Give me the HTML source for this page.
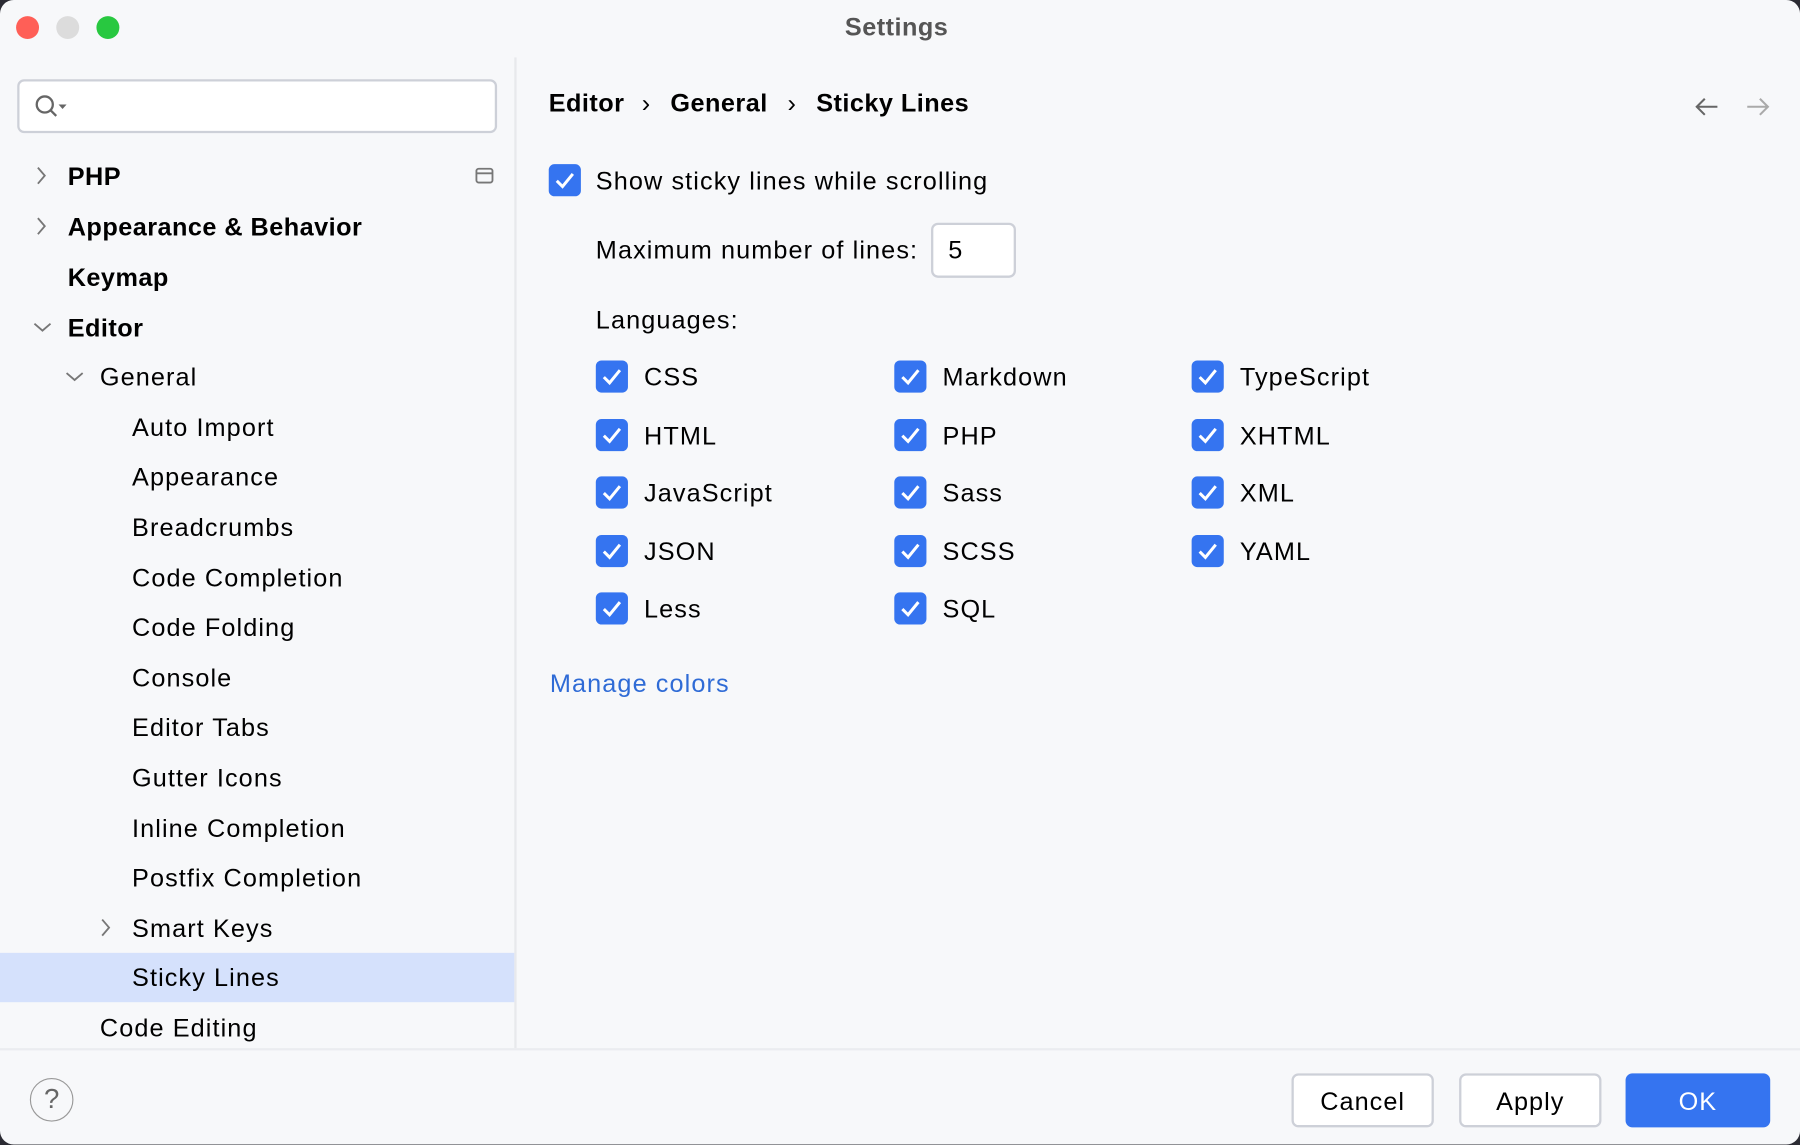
<!DOCTYPE html>
<html><head><meta charset="utf-8"><style>
html,body{margin:0;padding:0;width:1800px;height:1144px;overflow:hidden;background:#2b2b33}
#s{position:absolute;left:0;top:0;width:1568px;height:997px;transform:scale(1.148);transform-origin:0 0;background:#f7f8fa;border-radius:12px;overflow:hidden;font-family:"Liberation Sans",sans-serif;color:#000}
.a{position:absolute;white-space:nowrap}
.t{position:absolute;font-size:22px;line-height:26px;transform:translateY(-12px);white-space:nowrap;letter-spacing:0.95px}
.b{font-weight:bold;letter-spacing:0.4px}
.cb{position:absolute;width:28px;height:28px;background:#3574f0;border-radius:5px}
.cb svg{position:absolute;left:0;top:0}
.btn{position:absolute;top:935px;height:47px;border:2px solid #cdd0d8;border-radius:6px;background:#fff;box-sizing:border-box;font-size:22px;line-height:45px;text-align:center;letter-spacing:0.9px}
</style></head><body><div id="s">
<div class="a" style="left:14px;top:14px;width:20px;height:20px;border-radius:50%;background:#ff5f57"></div>
<div class="a" style="left:49px;top:14px;width:20px;height:20px;border-radius:50%;background:#dcdcdc"></div>
<div class="a" style="left:84px;top:14px;width:20px;height:20px;border-radius:50%;background:#28c840"></div>
<div class="t b" style="left:736px;top:23px;color:#555">Settings</div>
<div class="a" style="left:448px;top:50px;width:2px;height:863px;background:#e8e9ec"></div>
<div class="a" style="left:15px;top:69px;width:418px;height:47px;box-sizing:border-box;border:2px solid #cdd0d8;border-radius:6px;background:#fff"></div>
<svg class="a" style="left:28px;top:80px" width="34" height="26"><circle cx="11" cy="11" r="7" fill="none" stroke="#666" stroke-width="2"/><path d="M16 16l5 5" stroke="#666" stroke-width="2"/><path d="M23 11h7l-3.5 4z" fill="#666"/></svg>
<div class="a" style="left:0;top:830px;width:448px;height:43px;background:#d5e1fc"></div>
<svg class="a" style="left:0;top:0" width="448" height="913" fill="none" stroke="#777" stroke-width="1.6">
<path d="M33 146l6 7-6 7M33 190l6 7-6 7M30 282l7 6 7-6M58 325l7 6 7-6M89 801l6 7-6 7"/>
<rect x="415" y="147" width="14" height="12" rx="2"/><path d="M415 151h14"/>
</svg>
<div class="t b" style="left:59px;top:153px">PHP</div>
<div class="t b" style="left:59px;top:197px">Appearance &amp; Behavior</div>
<div class="t b" style="left:59px;top:241px">Keymap</div>
<div class="t b" style="left:59px;top:285px">Editor</div>
<div class="t" style="left:87px;top:328px">General</div>
<div class="t" style="left:115px;top:372px">Auto Import</div>
<div class="t" style="left:115px;top:415px">Appearance</div>
<div class="t" style="left:115px;top:459px">Breadcrumbs</div>
<div class="t" style="left:115px;top:503px">Code Completion</div>
<div class="t" style="left:115px;top:546px">Code Folding</div>
<div class="t" style="left:115px;top:590px">Console</div>
<div class="t" style="left:115px;top:633px">Editor Tabs</div>
<div class="t" style="left:115px;top:677px">Gutter Icons</div>
<div class="t" style="left:115px;top:721px">Inline Completion</div>
<div class="t" style="left:115px;top:764px">Postfix Completion</div>
<div class="t" style="left:115px;top:808px">Smart Keys</div>
<div class="t" style="left:115px;top:851px">Sticky Lines</div>
<div class="t" style="left:87px;top:895px">Code Editing</div>
<div class="a" style="left:0;top:913px;width:1568px;height:2px;background:#ebecf0"></div>
<div class="a" style="left:26px;top:939px;width:36px;height:36px;border:1.6px solid #999;border-radius:50%;font-size:24px;line-height:36px;text-align:center;color:#666">?</div>
<div class="btn" style="left:1125px;width:124px">Cancel</div>
<div class="btn" style="left:1271px;width:124px">Apply</div>
<div class="btn" style="left:1416px;width:126px;background:#3574f0;border-color:#3574f0;color:#fff">OK</div>
<div class="t b" style="left:478px;top:89px">Editor</div>
<div class="t" style="left:559px;top:89px">›</div>
<div class="t b" style="left:584px;top:89px">General</div>
<div class="t" style="left:686px;top:89px">›</div>
<div class="t b" style="left:711px;top:89px">Sticky Lines</div>
<svg class="a" style="left:1474px;top:82px" width="74" height="22" fill="none" stroke-width="1.8"><path d="M4 11h18M11 4l-7 7 7 7" stroke="#666"/><path d="M48 11h18M59 4l7 7-7 7" stroke="#aaa"/></svg>
<div class="cb" style="left:478px;top:143px"><svg width="28" height="28"><path d="M7 14.5l5 5 9-11" fill="none" stroke="#fff" stroke-width="2.6"/></svg></div>
<div class="t" style="left:519px;top:157px">Show sticky lines while scrolling</div>
<div class="t" style="left:519px;top:217px">Maximum number of lines:</div>
<div class="a" style="left:811px;top:194px;width:74px;height:48px;box-sizing:border-box;border:2px solid #cdd0d8;border-radius:6px;background:#fff"></div>
<div class="t" style="left:826px;top:217px">5</div>
<div class="t" style="left:519px;top:278px">Languages:</div>
<div id="g"></div>
<div class="t" style="left:479px;top:595px;color:#2f6bd6">Manage colors</div>
<script>
var cols=[519,779,1038],rows=[328,379,429,480,530];
var L=[["CSS","HTML","JavaScript","JSON","Less"],["Markdown","PHP","Sass","SCSS","SQL"],["TypeScript","XHTML","XML","YAML"]];
var h="";
L.forEach(function(c,i){c.forEach(function(n,j){var x=cols[i],y=rows[j];
h+='<div class="cb" style="left:'+x+'px;top:'+(y-14)+'px"><svg width="28" height="28"><path d="M7 14.5l5 5 9-11" fill="none" stroke="#fff" stroke-width="2.6"/></svg></div>';
h+='<div class="t" style="left:'+(x+42)+'px;top:'+y+'px">'+n+'</div>';});});
document.getElementById("g").outerHTML=h;
</script>
</div></body></html>
